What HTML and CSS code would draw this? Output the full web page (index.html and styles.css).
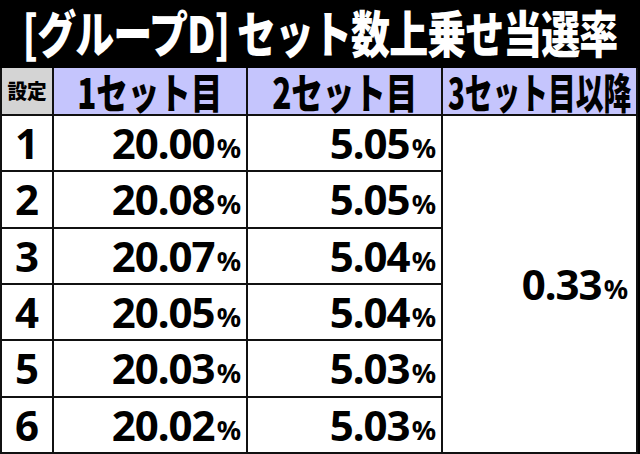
FILE: index.html
```html
<!DOCTYPE html>
<html lang="ja">
<head>
<meta charset="utf-8">
<title>グループD セット数上乗せ当選率</title>
<link rel="stylesheet" href="styles.css">
</head>
<body>
<div class="page">
  <h1 class="title"><span class="title-text">[グループD]&nbsp;セット数上乗せ当選率</span></h1>
  <div class="grid">
    <div class="cell head gray"><span class="small-head">設定</span></div>
    <div class="cell head blue"><span class="head-text">1セット目</span></div>
    <div class="cell head blue"><span class="head-text">2セット目</span></div>
    <div class="cell head blue"><span class="head-text wide">3セット目以降</span></div>

    <div class="cell set">1</div>
    <div class="cell val">20.00<span class="pct">%</span></div>
    <div class="cell val">5.05<span class="pct">%</span></div>
    <div class="cell val merged">0.33<span class="pct">%</span></div>

    <div class="cell set">2</div>
    <div class="cell val">20.08<span class="pct">%</span></div>
    <div class="cell val">5.05<span class="pct">%</span></div>

    <div class="cell set">3</div>
    <div class="cell val">20.07<span class="pct">%</span></div>
    <div class="cell val">5.04<span class="pct">%</span></div>

    <div class="cell set">4</div>
    <div class="cell val">20.05<span class="pct">%</span></div>
    <div class="cell val">5.04<span class="pct">%</span></div>

    <div class="cell set">5</div>
    <div class="cell val">20.03<span class="pct">%</span></div>
    <div class="cell val">5.03<span class="pct">%</span></div>

    <div class="cell set">6</div>
    <div class="cell val">20.02<span class="pct">%</span></div>
    <div class="cell val">5.03<span class="pct">%</span></div>
  </div>
</div>
</body>
</html>
```

FILE: styles.css
```css
html, body {
  margin: 0;
  padding: 0;
  background: #ffffff;
}

.page {
  width: 640px;
  height: 454px;
  overflow: hidden;
  background: #000000;
}

.title {
  margin: 0;
  height: 68px;
  display: flex;
  align-items: center;
  justify-content: center;
  color: #ffffff;
  font-family: "Noto Sans CJK JP", sans-serif;
  font-weight: 900;
  font-size: 40px;
  line-height: 1;
  white-space: nowrap;
  padding-bottom: 4px;
  box-sizing: border-box;
}

.title-text {
  display: inline-block;
  transform: scale(0.975, 1.25);
  letter-spacing: -1px;
}

.grid {
  width: 634px;
  height: 384px;
  padding: 0 2px 2px 2px;
  background: #111111;
  display: grid;
  grid-template-columns: 50px 192px 193px 193px;
  grid-template-rows: 46px repeat(6, 1fr);
  gap: 2px;
}

.cell {
  background: #ffffff;
  display: flex;
  align-items: center;
  color: #000000;
  white-space: nowrap;
  min-width: 0;
}

.head {
  justify-content: center;
  font-family: "Noto Sans CJK JP", sans-serif;
  font-weight: 900;
  line-height: 1;
}

.gray {
  background: #d4d4d4;
}

.blue {
  background: #c5c5fd;
}

.small-head {
  font-size: 20px;
  display: inline-block;
  transform: scaleX(0.98);
}

.head-text {
  font-size: 32px;
  display: inline-block;
  transform: scale(0.984, 1.31);
}

.head-text.wide {
  font-size: 28px;
  transform: scale(0.99, 1.5);
}

.set {
  justify-content: center;
  font-family: "Noto Sans", "Open Sans", sans-serif;
  font-weight: 700;
  font-size: 42px;
  line-height: 1;
}

.val {
  justify-content: flex-end;
  align-items: center;
  padding-right: 5px;
  font-family: "Noto Sans", "Open Sans", sans-serif;
  font-weight: 700;
  font-size: 42px;
  line-height: 1;
  letter-spacing: -1px;
}

.pct {
  font-size: 27px;
  letter-spacing: 0;
  margin-left: 2px;
  align-self: center;
  padding-top: 9px;
}

.merged {
  grid-column: 4;
  grid-row: 2 / span 6;
  padding-right: 8px;
}
```
